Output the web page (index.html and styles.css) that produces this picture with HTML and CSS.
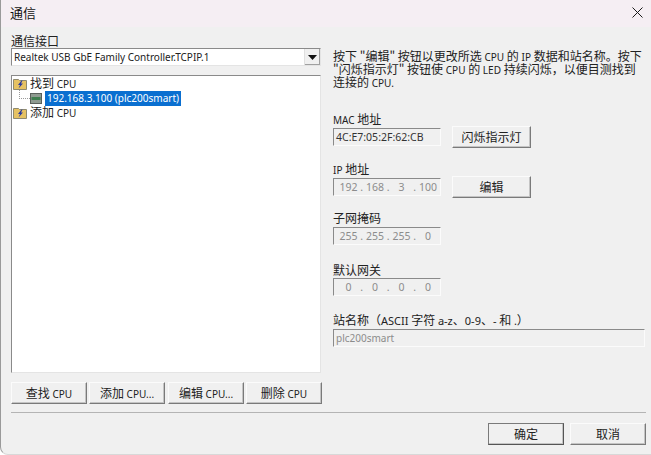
FILE: index.html
```html
<!DOCTYPE html>
<html lang="zh-CN">
<head>
<meta charset="utf-8">
<title>通信</title>
<link rel="stylesheet" href="styles.css">
</head>
<body>
<div class="window">
  <header class="titlebar">
    <span class="title">通信</span>
    <svg class="close" width="11" height="11" viewBox="0 0 11 11"><path d="M.5.5l10 10M10.500.5l-10 10" stroke="#1a1a1a" stroke-width="1" fill="none"/></svg>
  </header>
  <div class="main">
    <section class="left">
      <div class="label iface">通信接口</div>
      <div class="combo">
        <span class="combo-text">Realtek USB GbE Family Controller.TCPIP.1</span>
        <span class="combo-btn"><svg width="9" height="5" viewBox="0 0 9 5"><path d="M0 0h9L4.500 5z" fill="#111"/></svg></span>
      </div>
      <div class="tree">
        <div class="node">
          <svg class="folder" width="14" height="12" viewBox="0 0 14 12"><path d="M.5 1.500h5l1 1h7v9H.5z" fill="#e6c263" stroke="#8f8a70"/><path d="M8.500 2.500L5 7h2L5.500 10.500 10 5.500H8L9.500 2.500z" fill="#2a3aa0"/></svg>
          <span class="node-text">找到 <span class="lat">CPU</span></span>
        </div>
        <div class="node child">
          <span class="connector"></span>
          <svg class="device" width="12" height="11" viewBox="0 0 12 11"><rect x=".5" y=".5" width="11" height="10" fill="#8f9a90" stroke="#5a5f5a"/><rect x="1.500" y="4" width="9" height="3" fill="#3e7d4e"/></svg>
          <span class="selected">192.168.3.100 (plc200smart)</span>
        </div>
        <div class="node">
          <svg class="folder" width="14" height="12" viewBox="0 0 14 12"><path d="M.5 1.500h5l1 1h7v9H.5z" fill="#e6c263" stroke="#8f8a70"/><path d="M8.500 2.500L5 7h2L5.500 10.500 10 5.500H8L9.500 2.500z" fill="#2a3aa0"/></svg>
          <span class="node-text">添加 <span class="lat">CPU</span></span>
        </div>
      </div>
      <div class="tree-buttons">
        <button class="btn">查找 <span class="lat">CPU</span></button>
        <button class="btn">添加 <span class="lat">CPU...</span></button>
        <button class="btn">编辑 <span class="lat">CPU...</span></button>
        <button class="btn">删除 <span class="lat">CPU</span></button>
      </div>
    </section>
    <section class="right">
      <p class="desc">按下 "编辑" 按钮以更改所选 <span class="lat">CPU</span> 的 <span class="lat">IP</span> 数据和站名称。按下 "闪烁指示灯" 按钮使 <span class="lat">CPU</span> 的 <span class="lat">LED</span> 持续闪烁，以便目测找到连接的 <span class="lat">CPU.</span></p>
      <div class="field f-mac">
        <div class="label"><span class="lat">MAC</span> 地址</div>
        <div class="row"><div class="input mac">4C:E7:05:2F:62:CB</div><button class="btn side">闪烁指示灯</button></div>
      </div>
      <div class="field f-ip">
        <div class="label"><span class="lat">IP</span> 地址</div>
        <div class="row"><div class="input ip"><span>192</span><i>.</i><span>168</span><i>.</i><span>3</span><i>.</i><span>100</span></div><button class="btn side">编辑</button></div>
      </div>
      <div class="field f-sub">
        <div class="label">子网掩码</div>
        <div class="input ip gap2"><span>255</span><i>.</i><span>255</span><i>.</i><span>255</span><i>.</i><span>0</span></div>
      </div>
      <div class="field f-gw">
        <div class="label">默认网关</div>
        <div class="input ip gap1"><span>0</span><i>.</i><span>0</span><i>.</i><span>0</span><i>.</i><span>0</span></div>
      </div>
      <div class="field f-name">
        <div class="label name-label">站名称（<span class="lat">ASCII</span> 字符 <span class="lat">a-z</span>、<span class="lat">0-9</span>、<span class="lat">-</span> 和 <span class="lat">.</span>）</div>
        <div class="input wide gap2">plc200smart</div>
      </div>
    </section>
  </div>
  <div class="separator"></div>
  <footer class="footer">
    <button class="btn default">确定</button>
    <button class="btn">取消</button>
  </footer>
</div>
</body>
</html>
```
FILE: styles.css
```css
* { box-sizing: border-box; }
html, body { margin: 0; height: 100%; background: #fff; }
body { font: 11px/13px "Noto Sans", "Noto Sans CJK SC", sans-serif; color: #1c1c1c; }
.lat { font: 10px/1 "Noto Sans", sans-serif; }
.window {
  width: 651px; height: 455px;
  display: flex; flex-direction: column;
  background: #f0f0f0;
  border-left: 1px solid #9a9a9a;
  border-bottom-left-radius: 8px;
  border-bottom: 1px solid #d8d8d8;
}
.titlebar {
  height: 27px; flex: none;
  display: flex; align-items: center; justify-content: space-between;
  padding: 0 8px 2px 9px;
  background: #f5eef3;
}
.title { font: 13px/16px "Noto Sans CJK SC", sans-serif; color: #111; }
.close { display: block; }
.main { flex: none; height: 377px; display: flex; padding: 7px 5px 0 10px; }
.left { width: 311px; flex: none; display: flex; flex-direction: column; }
.label { height: 14px; font: 12px/14px "Noto Sans CJK SC", sans-serif; color: #222; white-space: nowrap; }
.name-label .lat { font-size: 11px; }
.iface { height: 15px; }
.combo {
  height: 18px; display: flex; align-items: center; justify-content: space-between;
  background: #fff;
  border: 1px solid; border-color: #8a8a8a #e4e4e4 #e4e4e4 #8a8a8a;
  width: 310px;
}
.combo-text { padding-left: 2px; color: #222; white-space: nowrap; font-size: 10px; }
.combo-btn {
  width: 16px; height: 16px; display: flex; align-items: center; justify-content: center;
  background: #f0f0f0; border-left: 1px solid #e0e0e0; box-shadow: inset -1px -1px 0 #a0a0a0;
}
.tree {
  flex: none; height: 298px; margin-top: 9px; width: 310px;
  background: #fff; padding: 1px 0 0 1px;
  border: 1px solid; border-color: #8a8a8a #e4e4e4 #e4e4e4 #8a8a8a;
}
.node { height: 14.500px; display: flex; align-items: center; gap: 3px; font: 12px/14px "Noto Sans CJK SC", sans-serif; color: #222; white-space: nowrap; }
.node-text { padding-bottom: 2px; }
.child { gap: 0; }
.connector { width: 11px; height: 9px; margin: -8px 0 0 6px; border-left: 1px dotted #999; border-bottom: 1px dotted #999; }
.device { margin-right: 3px; }
.selected { background: #0a6fd0; color: #fff; padding: 0 2px; font: 10px/15px "Noto Sans", sans-serif; }
.tree-buttons { display: flex; gap: 2px; margin-top: 9px; width: 312px; }
.btn {
  width: 76px; height: 22px; padding: 0 0 2px;
  background: #f0f0f0; color: #222;
  border: 1px solid; border-color: #fbfbfb #7a7a7a #7a7a7a #fbfbfb;
  box-shadow: inset -1px -1px 0 #c4c4c4;
  font: 12px/13px "Noto Sans CJK SC", sans-serif;
}
.tree-buttons .btn:nth-child(3) { margin-left: 1px; }
.right { margin-left: 11px; flex: 1; min-width: 0; padding-top: 15px; }
.desc { margin: 0; font: 12px/13px "Noto Sans CJK SC", sans-serif; color: #222; width: 310px; }
.row { display: flex; align-items: center; gap: 11px; }
.f-mac { margin-top: 24px; }
.f-ip { margin-top: 14px; }
.f-sub { margin-top: 13px; }
.f-gw { margin-top: 18px; }
.f-name { margin-top: 17px; }
.input {
  height: 18px; width: 108px; display: flex; align-items: center;
  border: 1px solid; border-color: #8a8a8a #fbfbfb #fbfbfb #8a8a8a;
  font: 10.500px/13px "Noto Sans", sans-serif; color: #333; padding-left: 2px; background: #f0f0f0;
}
.gap1 { margin-top: 1px; }
.gap2 { margin-top: 2px; }
.ip { color: #8c8c8c; padding-left: 4.500px; }
.ip span { flex: none; width: 20px; text-align: center; }
.ip i { flex: none; font-style: normal; width: 6.500px; text-align: center; }
.wide { width: 312px; color: #8c8c8c; font-size: 10px; }
.side { width: 79px; }
.separator { height: 1px; flex: none; margin: 8px 5px 0 10px; background: #b4b4b4; }
.footer { flex: none; display: flex; justify-content: flex-end; gap: 6px; padding: 10px 5px 0 0; }
.default { border-color: #7a7a7a #555 #555 #7a7a7a; }
```
